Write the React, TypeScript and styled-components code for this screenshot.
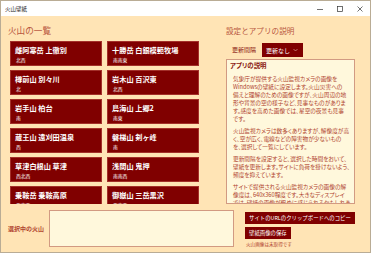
import React from "react";
import styled, { createGlobalStyle } from "styled-components";

const GlobalStyle = createGlobalStyle`
  html, body {
    margin: 0;
    padding: 0;
    background: #ffffff;
  }
  body {
    font-family: "Noto Sans CJK JP", "Noto Sans", sans-serif;
  }
`;

const Window = styled.div`
  width: 371px;
  height: 253px;
  box-sizing: border-box;
  border: 1px solid #b9ac95;
  display: flex;
  flex-direction: column;
  overflow: hidden;
  background: #ffe4b5;
`;

const TitleBar = styled.div`
  height: 15px;
  flex: none;
  background: #ffffff;
  display: flex;
  align-items: center;
  justify-content: space-between;
  padding-left: 4px;
`;

const TitleText = styled.span`
  font-size: 5.5px;
  color: #222;
`;

const Controls = styled.div`
  display: flex;
  height: 100%;
`;

const ControlButton = styled.div`
  width: 20px;
  height: 100%;
  display: flex;
  align-items: center;
  justify-content: center;
`;

const Body = styled.div`
  flex: 1;
  display: flex;
  flex-direction: column;
  padding: 0 0 0 7px;
`;

const Top = styled.div`
  display: grid;
  grid-template-columns: 192px 129px;
  column-gap: 26px;
  height: 188px;
`;

const Column = styled.div`
  display: flex;
  flex-direction: column;
  min-height: 0;
`;

const Heading = styled.h2<{ $size: number }>`
  margin: 0;
  height: 25px;
  display: flex;
  align-items: center;
  padding-top: 3px;
  box-sizing: border-box;
  font-size: ${(p) => p.$size}px;
  font-weight: 400;
  color: #b8563e;
  white-space: nowrap;
`;

const ListArea = styled.div`
  flex: 1;
  overflow: hidden;
  padding-left: 2px;
`;

const CardGrid = styled.div`
  display: grid;
  grid-template-columns: 92px 92px;
  grid-auto-rows: 25px;
  column-gap: 5px;
  row-gap: 4px;
`;

const Card = styled.div`
  box-sizing: border-box;
  background: #800000;
  border: 1px solid #a3302a;
  padding: 3px 0 0 4px;
  display: flex;
  flex-direction: column;
  color: #ffffff;
`;

const CardTitle = styled.div`
  font-size: 7.2px;
  font-weight: 700;
  line-height: 10px;
  white-space: nowrap;
`;

const CardSub = styled.div`
  font-size: 4.8px;
  line-height: 8px;
  margin-top: 1px;
  margin-left: 1px;
`;

const SettingRow = styled.div`
  display: flex;
  align-items: flex-end;
  height: 16px;
  padding-left: 6px;
`;

const SettingLabel = styled.span`
  font-size: 6px;
  color: #8b1a10;
  margin-right: 6px;
  line-height: 14px;
`;

const Dropdown = styled.div`
  width: 41px;
  height: 14px;
  background: #800000;
  color: #ffffff;
  font-size: 6px;
  display: flex;
  align-items: center;
  justify-content: space-between;
  padding: 0 5px 0 4px;
  box-sizing: border-box;
`;

const DescBox = styled.div`
  margin-top: 2px;
  flex: 1;
  box-sizing: border-box;
  background: #fff8dc;
  border: 1px solid #d29a82;
  overflow: hidden;
  padding: 1px 0 0 3px;
  color: #b0432e;
  font-feature-settings: "palt";
`;

const DescTitle = styled.div`
  font-size: 6.4px;
  font-weight: 700;
  line-height: 9px;
  color: #8b1a10;
  margin-bottom: 5px;
`;

const Para = styled.p`
  margin: 0 0 4px 3px;
  font-size: 5.7px;
  line-height: 8px;
`;

const Line = styled.span`
  display: block;
  white-space: nowrap;
`;

const Bottom = styled.div`
  display: flex;
  align-items: flex-start;
  padding-top: 6px;
`;

const SelectedLabel = styled.span`
  width: 41px;
  font-size: 6px;
  font-weight: 700;
  color: #b0432e;
  align-self: center;
  margin-top: -1px;
`;

const SelectedBox = styled.div`
  width: 185px;
  height: 37px;
  box-sizing: border-box;
  background: #fff8dc;
  border: 1px solid #d29a82;
`;

const Actions = styled.div`
  margin-left: 11px;
  padding-top: 2px;
  display: flex;
  flex-direction: column;
  align-items: flex-start;
  gap: 3px;
`;

const ActionButton = styled.div`
  height: 12px;
  background: #800000;
  color: #ffffff;
  font-size: 5.4px;
  display: flex;
  align-items: center;
  padding: 0 4px;
  white-space: nowrap;
`;

const Status = styled.span`
  font-size: 4.6px;
  color: #b0432e;
  margin-top: -1px;
  padding-left: 1px;
`;

const volcanoes = [
  { name: "雌阿寒岳 上徹別", dir: "北西" },
  { name: "十勝岳 白銀模範牧場", dir: "南南東" },
  { name: "樽前山 別々川", dir: "北" },
  { name: "岩木山 百沢東", dir: "北西" },
  { name: "岩手山 柏台", dir: "南" },
  { name: "鳥海山 上郷2", dir: "南東" },
  { name: "蔵王山 遠刈田温泉", dir: "西" },
  { name: "磐梯山 剣ヶ峰", dir: "南" },
  { name: "草津白根山 草津", dir: "西北西" },
  { name: "浅間山 鬼押", dir: "南南西" },
  { name: "乗鞍岳 乗鞍高原", dir: "西南西" },
  { name: "御嶽山 三岳黒沢", dir: "西南西" },
];

const paragraphs = [
  [
    "気象庁が提供する火山監視カメラの画像を",
    "Windowsの壁紙に設定します。火山災害への",
    "備えと理解のための画像ですが、火山周辺の地",
    "形や背景の空の様子など、見事なものがありま",
    "す。感度を高めた画像では、星空の夜景も見事",
    "です。",
  ],
  [
    "火山監視カメラは数多くありますが、解像度が高",
    "く、空が広く、電線などの障害物が少ないもの",
    "を、選択して一覧にしています。",
  ],
  [
    "更新間隔を設定すると、選択した時間をおいて、",
    "壁紙を更新します。サイトに負荷を掛けないよう、",
    "頻度を抑えています。",
  ],
  [
    "サイトで提供される火山監視カメラの画像の解",
    "像度は、640x360程度です。大きなディスプレイ",
    "では、壁紙の画像が粗めに感じられるかもしれま",
    "せん。",
  ],
];

export default function App() {
  return (
    <>
      <GlobalStyle />
      <Window>
        <TitleBar>
          <TitleText>火山壁紙</TitleText>
          <Controls>
            <ControlButton>
              <svg width="8" height="8" viewBox="0 0 8 8">
                <line x1="1" y1="4.5" x2="7" y2="4.5" stroke="#333" strokeWidth="0.7" />
              </svg>
            </ControlButton>
            <ControlButton>
              <svg width="8" height="8" viewBox="0 0 8 8">
                <rect x="1.5" y="1.5" width="5" height="5" fill="none" stroke="#333" strokeWidth="0.7" />
              </svg>
            </ControlButton>
            <ControlButton>
              <svg width="8" height="8" viewBox="0 0 8 8">
                <path d="M1.5 1.5 L6.5 6.5 M6.5 1.5 L1.5 6.5" stroke="#333" strokeWidth="0.7" />
              </svg>
            </ControlButton>
          </Controls>
        </TitleBar>
        <Body>
          <Top>
            <Column>
              <Heading $size={8.6}>火山の一覧</Heading>
              <ListArea>
                <CardGrid>
                  {volcanoes.map((v) => (
                    <Card key={v.name}>
                      <CardTitle>{v.name}</CardTitle>
                      <CardSub>{v.dir}</CardSub>
                    </Card>
                  ))}
                </CardGrid>
              </ListArea>
            </Column>
            <Column>
              <Heading $size={7.6}>設定とアプリの説明</Heading>
              <SettingRow>
                <SettingLabel>更新間隔</SettingLabel>
                <Dropdown>
                  <span>更新なし</span>
                  <svg width="5" height="4" viewBox="0 0 5 4">
                    <path d="M0.5 1 L2.5 3 L4.5 1" fill="none" stroke="#e8b8b0" strokeWidth="0.6" />
                  </svg>
                </Dropdown>
              </SettingRow>
              <DescBox>
                <DescTitle>アプリの説明</DescTitle>
                {paragraphs.map((lines, i) => (
                  <Para key={i}>
                    {lines.map((l) => (
                      <Line key={l}>{l}</Line>
                    ))}
                  </Para>
                ))}
              </DescBox>
            </Column>
          </Top>
          <Bottom>
            <SelectedLabel>選択中の火山</SelectedLabel>
            <SelectedBox />
            <Actions>
              <ActionButton>サイトのURLのクリップボードへのコピー</ActionButton>
              <ActionButton>壁紙画像の保存</ActionButton>
              <Status>火山画像は未取得です</Status>
            </Actions>
          </Bottom>
        </Body>
      </Window>
    </>
  );
}
